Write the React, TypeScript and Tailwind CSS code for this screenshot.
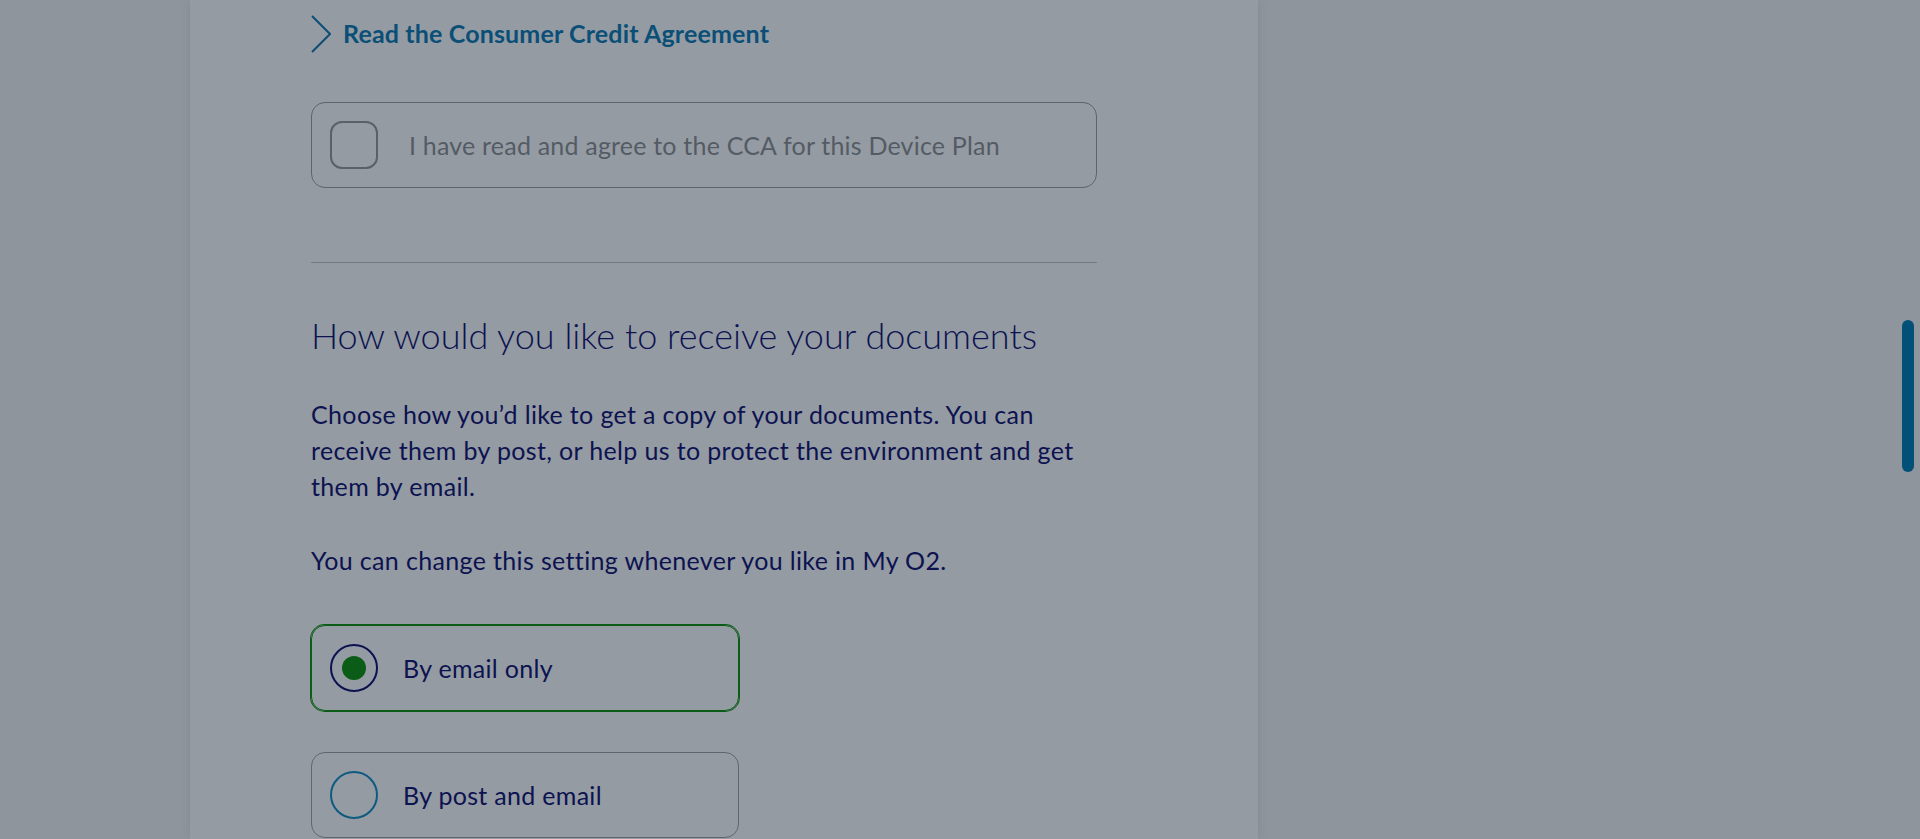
import { useState } from 'react';

const Chevron = () => (
  <svg width="20" height="38" viewBox="0 0 20 38" fill="none" className="shrink-0">
    <polyline points="1,1 19,19 1,37" stroke="#0b4f77" strokeWidth="2" strokeLinejoin="miter" />
  </svg>
);

const RadioCard = ({
  label,
  checked,
  onSelect,
}: {
  label: string;
  checked: boolean;
  onSelect: () => void;
}) => (
  <button
    type="button"
    onClick={onSelect}
    className={
      checked
        ? 'flex h-[86px] w-[428px] items-center gap-[25px] rounded-[14px] border border-[#0a5c16] px-[18px] text-left ring-1 ring-[#0a5c16]'
        : 'flex h-[86px] w-[428px] items-center gap-[25px] rounded-[14px] border border-[#60666e] px-[18px] text-left'
    }
  >
    <span
      className={
        checked
          ? 'flex h-12 w-12 shrink-0 items-center justify-center rounded-full border-2 border-[#0c1150]'
          : 'flex h-12 w-12 shrink-0 items-center justify-center rounded-full border-2 border-[#0e5a80]'
      }
    >
      {checked && <span className="h-6 w-6 rounded-full bg-[#0a5c16]" />}
    </span>
    <span className="text-[25px] leading-9 tracking-[0.3px] text-[#0d1250]">{label}</span>
  </button>
);

const App = () => {
  const [agreed, setAgreed] = useState(false);
  const [delivery, setDelivery] = useState<'email' | 'post'>('email');

  return (
    <div
      className="relative flex h-[839px] overflow-hidden bg-[#8e959d]"
      style={{ fontFamily: 'Lato, "Open Sans", sans-serif' }}
    >
      <div className="ml-[190px] w-[1068px] shrink-0 bg-[#949ba3] pl-[121px] pt-4 shadow-[0_0_10px_rgba(0,0,0,0.08)]">
        <div className="w-[786px]">
          <a href="#" className="flex h-9 items-center gap-3 text-[25px] font-bold tracking-[0.15px] text-[#0b4f77]">
            <Chevron />
            <span>Read the Consumer Credit Agreement</span>
          </a>

          <label className="mt-[50px] flex h-[86px] cursor-pointer items-center gap-[31px] rounded-[14px] border border-[#5e646c] px-[18px]">
            <input
              type="checkbox"
              checked={agreed}
              onChange={() => setAgreed(!agreed)}
              className="h-12 w-12 shrink-0 appearance-none rounded-[12px] border-2 border-[#596069]"
            />
            <span className="text-[25px] leading-9 tracking-[0.2px] text-[#545b64]">
              I have read and agree to the CCA for this Device Plan
            </span>
          </label>

          <div className="mt-[74px] h-px bg-[#737a82]" />

          <h2 className="mt-[50px] text-[36px] font-light leading-[44px] text-[#0d1250]">
            How would you like to receive your documents
          </h2>

          <p className="mt-[39px] text-[25px] leading-9 tracking-[0.35px] text-[#0d1250]">
            Choose how you’d like to get a copy of your documents. You can receive them by post, or help us
            to protect the environment and get them by email.
          </p>
          <p className="mt-[38px] text-[25px] leading-9 tracking-[0.35px] text-[#0d1250]">
            You can change this setting whenever you like in My O2.
          </p>

          <div className="mt-[47px] flex flex-col gap-[41px]">
            <RadioCard label="By email only" checked={delivery === 'email'} onSelect={() => setDelivery('email')} />
            <RadioCard label="By post and email" checked={delivery === 'post'} onSelect={() => setDelivery('post')} />
          </div>
        </div>
      </div>

      <div className="absolute right-[6px] top-[320px] h-[152px] w-3 rounded-full bg-[#025078]" />
    </div>
  );
};

export default App;
